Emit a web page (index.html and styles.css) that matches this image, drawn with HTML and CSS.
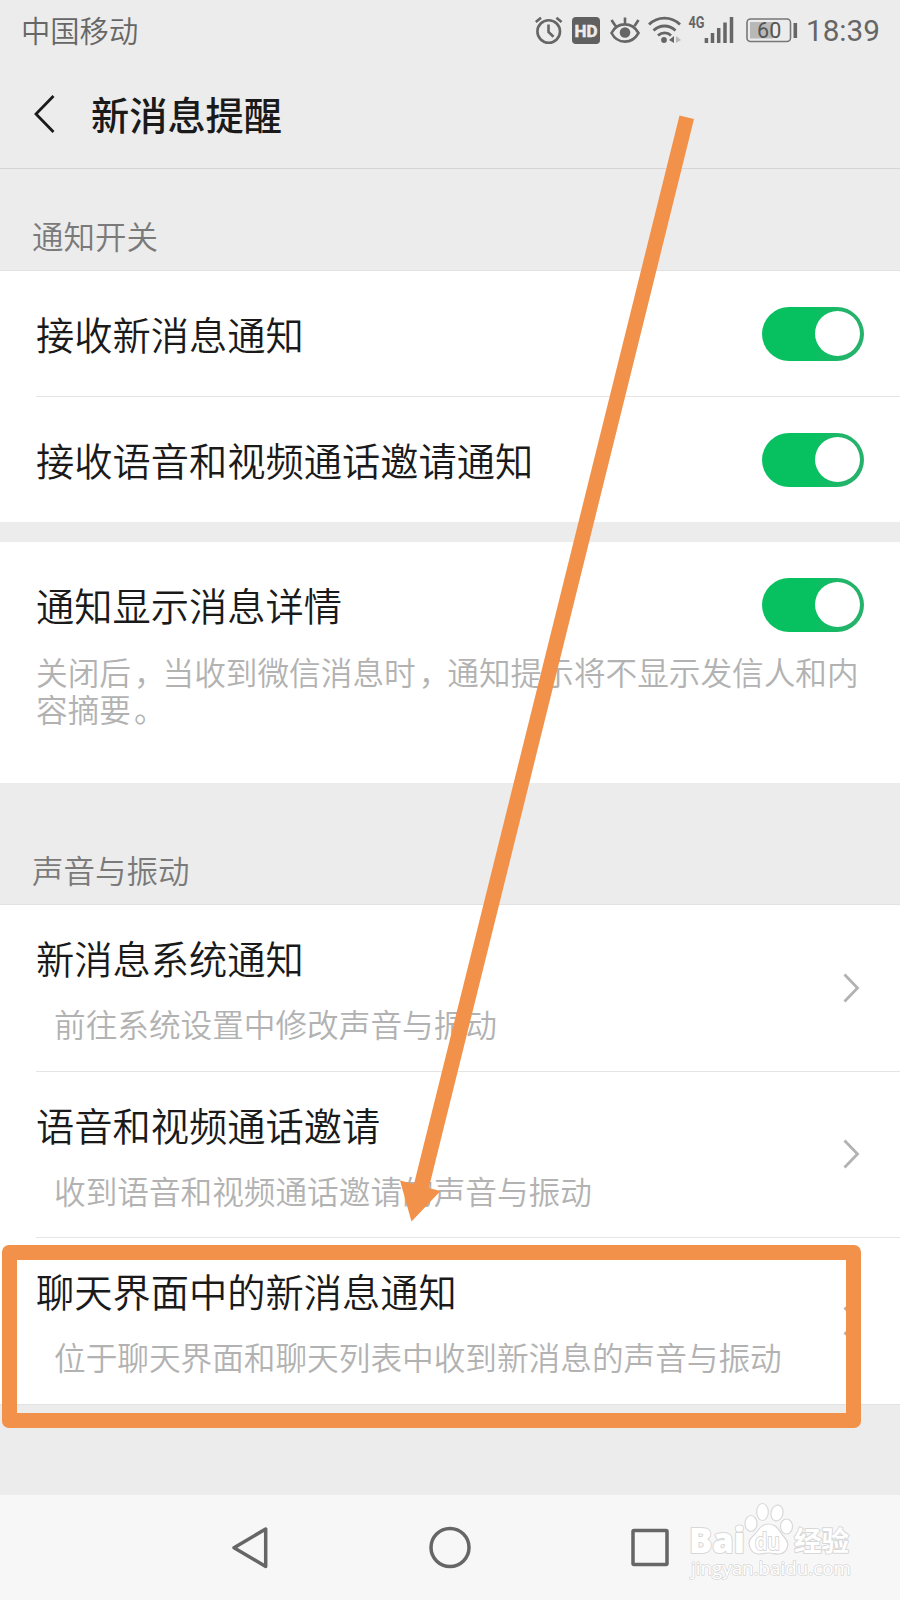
FILE: index.html
```html
<!DOCTYPE html>
<html lang="zh-CN">
<head>
<meta charset="utf-8">
<title>新消息提醒</title>
<link rel="stylesheet" href="styles.css">
</head>
<body>
<div class="screen">
  <header class="status">
    <span class="carrier">中国移动</span>
    <svg class="status-icons" width="280" height="60" viewBox="0 0 280 60" fill="none" stroke="#666" stroke-width="2.6">
      <circle cx="28.700" cy="31.500" r="11.300"/>
      <path d="M28.500 24.500v7.500l5 4.800M15.800 22l5.200-4.200M41.600 22l-5.200-4.200"/>
      <rect x="52" y="17" width="28" height="27" rx="4" fill="#606060" stroke="none"/>
      <text class="hd" x="54.500" y="36.500" textLength="23" lengthAdjust="spacingAndGlyphs">HD</text>
      <path d="M91.500 33c6-11.500 20.500-11.500 27 0c-6.500 11.500-21 11.500-27 0zM105 24v-6.500M95.500 26l-4-6M114.500 26l4-6"/>
      <circle cx="105" cy="32.500" r="5.300" fill="#666" stroke="none"/>
      <path d="M129 24.500c9-8.500 22-8.500 31 0M133.500 30.500c6.500-6 15.500-6 22 0M138 35.500c4-3.500 9.500-3.500 13 0" stroke-width="2.800"/>
      <circle cx="144" cy="40" r="2.900" fill="#666" stroke="none"/>
      <path d="M149 40l5-4v7z" fill="#666" stroke="none"/>
      <path d="M156 36v7l5-3z" fill="#bbb" stroke="none"/>
      <text class="net" x="168.500" y="27.800" textLength="16" lengthAdjust="spacingAndGlyphs">4G</text>
      <path d="M186.400 38v5M192.500 33v10M198.700 28v15M205 22.500v20.500M211.500 17v26" stroke-width="3.500"/>
      <rect x="227" y="19" width="43.500" height="22.500" rx="3.500" stroke="#777" stroke-width="1.600"/>
      <rect x="230" y="22" width="23" height="16.500" fill="#b8b8b8" stroke="none"/>
      <path d="M275.300 23v15" stroke-width="3.600"/>
      <text class="pct" x="249.200" y="38" text-anchor="middle">60</text>
    </svg>
    <span class="clock">18:39</span>
  </header>
  <div class="titlebar">
    <svg width="24" height="44" viewBox="0 0 24 44" fill="none" stroke="#1a1a1a" stroke-width="2.800"><path d="M20.500 4L3 22l17.500 18"/></svg>
    <h1 class="title">新消息提醒</h1>
  </div>
  <h2 class="section section-first">通知开关</h2>
  <div class="group">
    <div class="row row-first"><span class="label">接收新消息通知</span><span class="toggle"></span></div>
    <div class="row"><span class="label">接收语音和视频通话邀请通知</span><span class="toggle"></span></div>
  </div>
  <div class="group detail">
    <div class="row detail-row"><span class="label">通知显示消息详情</span><span class="toggle"></span></div>
    <p class="note">关闭后<span class="punct">，</span>当收到微信消息时<span class="punct">，</span>通知提示将不显示发信人和内<br>容摘要<span class="punct">。</span></p>
  </div>
  <h2 class="section section-sound">声音与振动</h2>
  <div class="group group-last">
    <div class="row link"><div class="texts"><div class="label">新消息系统通知</div><div class="desc">前往系统设置中修改声音与振动</div></div>
      <svg class="chev" width="20" height="32" viewBox="0 0 20 32"><path d="M2.500 2.500l13 13.500l-13 13.500"/></svg></div>
    <div class="row link"><div class="texts"><div class="label">语音和视频通话邀请</div><div class="desc">收到语音和视频通话邀请的声音与振动</div></div>
      <svg class="chev" width="20" height="32" viewBox="0 0 20 32"><path d="M2.500 2.500l13 13.500l-13 13.500"/></svg></div>
    <div class="row link"><div class="texts"><div class="label">聊天界面中的新消息通知</div><div class="desc">位于聊天界面和聊天列表中收到新消息的声音与振动</div></div>
      <svg class="chev" width="20" height="32" viewBox="0 0 20 32"><path d="M2.500 2.500l13 13.500l-13 13.500"/></svg></div>
  </div>
  <nav class="nav">
    <svg width="900" height="105" viewBox="0 0 900 105" fill="none" stroke="#666" stroke-width="3.500" stroke-linejoin="round">
      <path d="M265.700 34v37.500L234 52.700z"/>
      <circle cx="450" cy="52.500" r="19"/>
      <rect x="633" y="35.500" width="34" height="34" rx="1"/>
      <g class="mark">
        <text class="bai" x="689" y="58" textLength="56" lengthAdjust="spacingAndGlyphs">Bai</text>
        <ellipse cx="751" cy="28.500" rx="6" ry="8"/>
        <ellipse cx="762.500" cy="17" rx="5.800" ry="8.500"/>
        <ellipse cx="777" cy="18" rx="6" ry="8" transform="rotate(12 777 18)"/>
        <ellipse cx="786.500" cy="31.500" rx="6" ry="7.500"/>
        <path d="M768.500 29c-9 0-10 8-16.500 13c-6 5-2 17 7 17c5 0 6-1 10-1s6 1.500 10 1c9-1 11-11 6-16c-6-6-7-14-16.500-14z"/>
        <text class="du" x="755" y="54.500" textLength="25" lengthAdjust="spacingAndGlyphs">du</text>
        <text class="jing" x="794" y="56" textLength="55" lengthAdjust="spacingAndGlyphs">经验</text>
        <text class="url" x="691" y="80" textLength="160" lengthAdjust="spacingAndGlyphs">jingyan.baidu.com</text>
      </g>
    </svg>
  </nav>
  <div class="frame"></div>
  <svg class="arrow" width="900" height="1600" viewBox="0 0 900 1600"><path d="M679.500 115.500L694 119L428.800 1188L440.500 1191L411.500 1221.500L400 1180.500L414 1184z"/></svg>
</div>
</body>
</html>
```
FILE: styles.css
```css
* { box-sizing: border-box; }
body { margin: 0; }
.screen {
  position: relative;
  width: 900px;
  height: 1600px;
  overflow: hidden;
  display: flex;
  flex-direction: column;
  background: #ececec;
  font-family: "Noto Sans CJK SC", sans-serif;
  font-weight: 350;
  color: #1a1a1a;
}
h1, h2, p { margin: 0; font-weight: inherit; }
.status {
  height: 60px;
  display: flex;
  align-items: center;
  padding-left: 21px;
  color: #666;
}
.carrier { font-size: 29.3px; line-height: 58px; height: 60px; width: 499px; }
.status-icons { flex: none; }
.clock { font: 29.7px/60px Roboto, sans-serif; margin-left: 6px; height: 60px; padding-top: 1px; }
.hd { font: 700 16.500px Roboto, sans-serif; fill: #ececec; stroke: #ececec; stroke-width: 0.500px; }
.net { font: 700 16.500px Roboto, sans-serif; fill: #666; stroke: none; }
.pct { font: 21.500px Roboto, sans-serif; fill: #555; stroke: none; }
.titlebar {
  height: 109px;
  display: flex;
  align-items: center;
  padding: 0 0 0 33px;
  gap: 34px;
  border-bottom: 1px solid #d5d5d5;
}
.title { font-size: 38.2px; line-height: 50px; font-weight: 500; }
.section { font-size: 31.500px; line-height: 40px; padding-left: 32px; color: #7a7a7a; }
.section-first { height: 101px; padding-top: 46px; }
.section-sound { height: 121px; padding-top: 66px; }
.group { background: #fff; border-top: 1px solid #e2e2e2; }
.row {
  height: 125px;
  margin-left: 36px;
  padding-right: 36px;
  display: flex;
  align-items: center;
  justify-content: space-between;
  border-bottom: 1px solid #e5e5e5;
}
.row-first { height: 126px; }
.row:last-child, .detail-row { border-bottom: 0; }
.label { font-size: 38.25px; line-height: 50px; }
.toggle {
  width: 102px;
  height: 54px;
  border-radius: 27px;
  background: linear-gradient(90deg, #07c160 50%, #25b36b 85%);
  padding: 4.500px 4px;
  display: flex;
  justify-content: flex-end;
}
.toggle::before { content: ""; width: 45px; height: 45px; border-radius: 50%; background: #fff; }
.detail { margin-top: 20px; height: 241px; border-top: 0; }
.detail-row { height: 125px; }
.note { font-size: 31.65px; line-height: 37px; padding-left: 36px; color: #b2b2b2; white-space: nowrap; margin-top: -14px; }
.punct { margin: 0 -3px 0 3px; }
.link { height: 166.500px; padding-right: 38px; }
.texts { align-self: flex-start; padding-top: 28px; }
.desc { font-size: 31.65px; line-height: 40px; color: #b2b2b2; padding: 20px 0 0 18px; white-space: nowrap; }
.group-last { height: 501px; border-bottom: 1px solid #e2e2e2; }
.chev { fill: none; stroke: #b2b2b2; stroke-width: 2.800; }
.nav { margin-top: auto; height: 105px; background: #f7f7f7; }
.nav svg { display: block; }
.mark { fill: #fff; stroke: #d8d8d8; stroke-width: 1.200; }
.mark text { paint-order: stroke; stroke-width: 2px; }
.bai { font: 800 35px "Open Sans", sans-serif; }
.du { font: 600 23px "Open Sans", sans-serif; }
.jing { font: 700 27px "Noto Sans CJK SC", sans-serif; }
.mark .url { font: 18px "Open Sans", sans-serif; stroke-width: 1.500px; }
.frame {
  position: absolute;
  left: 2px;
  top: 1245px;
  width: 859px;
  height: 183px;
  border: 15px solid #f2914a;
  border-radius: 7px;
}
.arrow { position: absolute; left: 0; top: 0; fill: #f2914a; }
```
